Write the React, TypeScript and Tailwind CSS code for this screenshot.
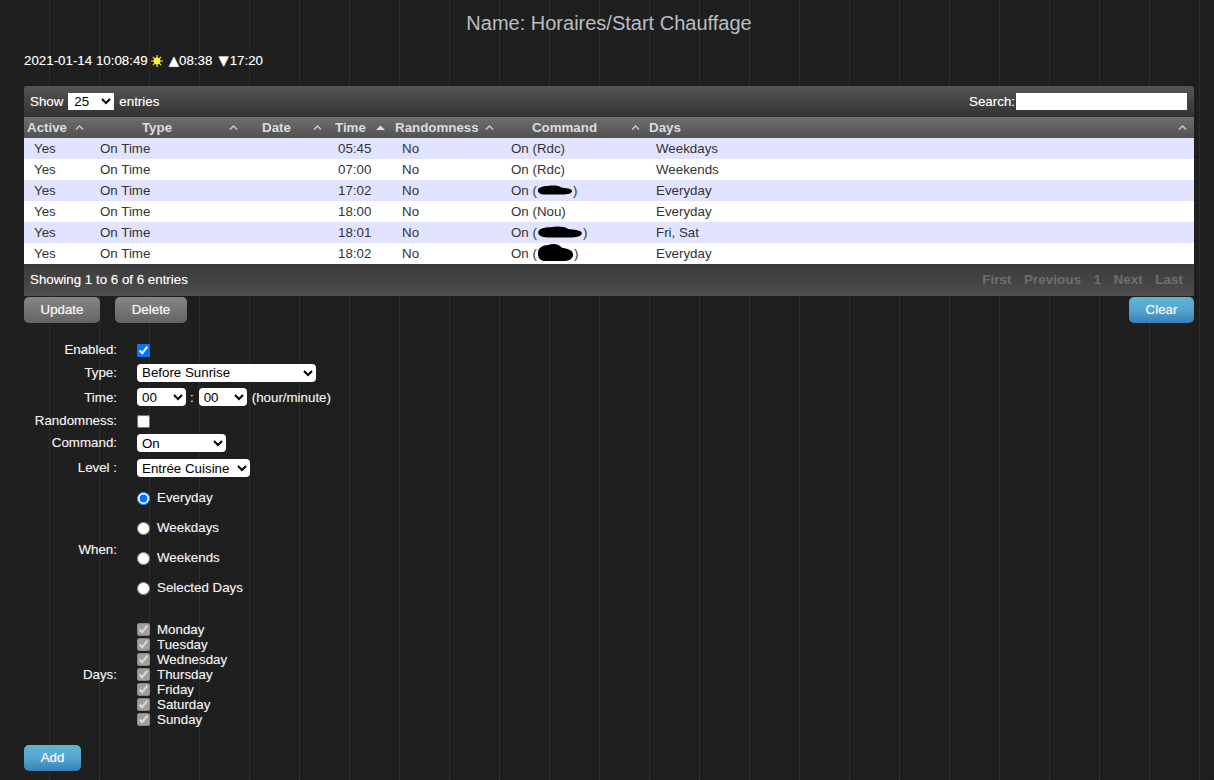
import React from "react";

const rows = [
  ["05:45", <>On (Rdc)</>, "Weekdays"],
  ["07:00", <>On (Rdc)</>, "Weekends"],
  ["17:02", <>On (<Blob w={36} h={10} />)</>, "Everyday"],
  ["18:00", <>On (Nou)</>, "Everyday"],
  ["18:01", <>On (<Blob w={46} h={12} />)</>, "Fri, Sat"],
  ["18:02", <>On (<Blob w={37} h={19} />)</>, "Everyday"],
] as const;

function Blob({ w, h }: { w: number; h: number }) {
  return (
    <svg width={w} height={h} viewBox="0 0 40 20" preserveAspectRatio="none" className="inline-block align-middle -mt-0.5">
      <path d="M1 11C1 5 6 2 12 2c6-2 12-1 15 3 5 1 12 2 12 7 0 5-5 7-11 7H9C4 19 1 16 1 11Z" fill="#000" />
    </svg>
  );
}

function Arrow({ solid }: { solid?: boolean }) {
  return (
    <svg width="9" height="6" viewBox="0 0 9 6" className="block shrink-0">
      {solid ? <path d="M4.5 0.5 9 5H0Z" fill="#ddd" /> : <path d="M1 4.5 4.5 1 8 4.5" fill="none" stroke="#ccc" strokeWidth="1.4" />}
    </svg>
  );
}

function Th({ label, w, center, solid, arrow, pl, shift }: { label: string; w: number; center?: boolean; solid?: boolean; arrow: number; pl?: number; shift?: number }) {
  return (
    <th style={{ width: w }} className="p-0 font-bold text-[13.33px] text-[#dcdcdc]">
      <div className="flex items-center h-[21px]" style={{ paddingRight: arrow, paddingLeft: pl ?? 3 }}>
        <span className={center ? "flex-1 text-center" : "flex-1 text-left"} style={{ paddingRight: shift ?? 0 }}>{label}</span>
        <Arrow solid={solid} />
      </div>
    </th>
  );
}

function Row({ label, children, className }: { label: string; children: React.ReactNode; className?: string }) {
  return (
    <div className={"flex items-center " + (className ?? "")}>
      <div className="w-[93px] text-right shrink-0">{label}</div>
      <div className="ml-5 flex items-center">{children}</div>
    </div>
  );
}

const selectCls = "appearance-auto bg-white text-black text-[13.33px] h-[18px] rounded-[4px] border-0 outline-none pl-[1px]";
const btn = "h-[26px] rounded-[5px] text-[13.33px] text-[#f4f4f4] flex items-center justify-center [text-shadow:0_0_1px_rgba(255,255,255,0.6)]";
const grayBtn = btn + " bg-gradient-to-b from-[#868686] to-[#646464]";
const blueBtn = btn + " bg-gradient-to-b from-[#5fb4d6] via-[#55a6cf] to-[#3a7fb8]";

export default function App() {
  return (
    <div
      className="min-h-[780px] w-full pl-6 pr-5 text-[13.33px] text-[#f2f2f2] bg-[#1e1e1e] bg-[linear-gradient(90deg,transparent_49px,#2c2c2c_49px,#2c2c2c_50px,transparent_50px),conic-gradient(#222222_25%,#1b1b1b_0_50%,#222222_0_75%,#1b1b1b_0)] bg-[size:50px_100%,2px_2px] overflow-hidden [text-shadow:0_0_1px_rgba(255,255,255,0.35)]"
      style={{ fontFamily: '"Liberation Sans", Arial, sans-serif' }}
    >
      <h1 className="pt-[12px] text-center text-[20px] leading-[22px] text-[#b8bec4] [text-shadow:none]">Name: Horaires/Start Chauffage</h1>

      <div className="mt-[17px] flex items-center h-[20px] text-white">
        <span>2021-01-14 10:08:49</span>
        <svg width="12" height="12" viewBox="0 0 12 12" className="ml-[3px]">
          <g stroke="#ffee33" strokeWidth="1.2">
            <path d="M6 0v12M0 6h12M1.8 1.8l8.4 8.4M10.2 1.8l-8.4 8.4" />
          </g>
          <circle cx="6" cy="6" r="3.4" fill="#ffee33" />
        </svg>
        <span className="ml-[6px] font-['DejaVu_Sans']">▲</span>
        <span>08:38</span>
        <span className="ml-[6px] font-['DejaVu_Sans']">▼</span>
        <span className="ml-[1px]">17:20</span>
      </div>

      <div className="mt-[15px] rounded-t-[3px] overflow-hidden">
        <div className="h-[31px] pl-[6px] pr-[7px] flex items-center justify-between bg-gradient-to-b from-[#555555] to-[#323232] text-white">
          <div className="flex items-center">
            Show
            <select defaultValue="25" className="appearance-auto bg-white text-black text-[13.33px] w-[46px] h-[17px] mx-[5px] border-0 pl-[2px]">
              <option>25</option>
            </select>
            entries
          </div>
          <div className="flex items-center">
            Search:
            <input className="w-[171px] h-[17px] bg-white ml-[1px]" />
          </div>
        </div>

        <table className="w-full table-fixed border-collapse [text-shadow:none]">
          <thead>
            <tr className="bg-gradient-to-b from-[#6e6e6e] to-[#525252]">
              <Th label="Active" w={66} arrow={6} />
              <Th label="Type" w={158} center arrow={10} shift={8} />
              <Th label="Date" w={80} center arrow={6} shift={11} />
              <Th label="Time" w={64} arrow={7} pl={7} solid />
              <Th label="Randomness" w={109} arrow={7} />
              <Th label="Command" w={145} center arrow={6} shift={6} />
              <Th label="Days" w={548} arrow={7} />
            </tr>
          </thead>
          <tbody>
            {rows.map((r, i) => (
              <tr key={i} className={(i % 2 === 0 ? "bg-[#e2e4ff]" : "bg-white") + " h-[21px] text-[13.33px] text-[#333333]"}>
                <td className="pl-[10px] p-0">Yes</td>
                <td className="pl-[10px] p-0">On Time</td>
                <td className="p-0"></td>
                <td className="pl-[10px] p-0">{r[0]}</td>
                <td className="pl-[10px] p-0">No</td>
                <td className="pl-[10px] p-0">{r[1]}</td>
                <td className="pl-[10px] p-0">{r[2]}</td>
              </tr>
            ))}
          </tbody>
        </table>

        <div className="h-[32px] px-[6px] flex items-center justify-between bg-gradient-to-b from-[#3a3a3a] to-[#4e4e4e] text-white">
          <span>Showing 1 to 6 of 6 entries</span>
          <div className="flex items-center gap-[12.5px] pr-[5px] text-[#6e6e6e] font-bold text-[13.5px] [text-shadow:none]">
            <span>First</span>
            <span>Previous</span>
            <span>1</span>
            <span>Next</span>
            <span>Last</span>
          </div>
        </div>
      </div>

      <div className="mt-[1px] flex items-center">
        <button className={grayBtn + " w-[76px]"}>Update</button>
        <button className={grayBtn + " w-[72px] ml-[15px]"}>Delete</button>
        <button className={blueBtn + " w-[65px] ml-auto"}>Clear</button>
      </div>

      <div className="mt-[17px]">
        <Row label="Enabled:" className="h-[20px]">
          <input type="checkbox" defaultChecked className="appearance-auto w-[13px] h-[13px] m-0" />
        </Row>
        <Row label="Type:" className="h-[25px]">
          <select className={selectCls + " w-[179px]"}><option>Before Sunrise</option></select>
        </Row>
        <Row label="Time:" className="h-[24px] pt-[1px]">
          <select className={selectCls + " w-[49px]"}><option>00</option></select>
          <span className="ml-[4px] mr-[5px]">:</span>
          <select className={selectCls + " w-[48px]"}><option>00</option></select>
          <span className="ml-[5px]">(hour/minute)</span>
        </Row>
        <Row label="Randomness:" className="h-[24px]">
          <input type="checkbox" className="appearance-auto w-[13px] h-[13px] m-0" />
        </Row>
        <Row label="Command:" className="h-[20px]">
          <select className={selectCls + " w-[89px]"}><option>On</option></select>
        </Row>
        <Row label="Level :" className="h-[30px]">
          <select className={selectCls + " w-[113px]"}><option>Entrée Cuisine</option></select>
        </Row>

        <Row label="When:">
          <div className="flex flex-col pb-[14px]">
            {["Everyday", "Weekdays", "Weekends", "Selected Days"].map((d, i) => (
              <label key={d} className="flex items-center h-[30px]">
                <input type="radio" name="when" defaultChecked={i === 0} className="appearance-auto w-[13px] h-[13px] m-0 mr-[7px]" />
                <span className="-mt-[1px]">{d}</span>
              </label>
            ))}
          </div>
        </Row>

        <Row label="Days:" className="mt-[5px]">
          <div className="flex flex-col">
            {["Monday", "Tuesday", "Wednesday", "Thursday", "Friday", "Saturday", "Sunday"].map((d) => (
              <label key={d} className="flex items-center h-[15px]">
                <input type="checkbox" disabled defaultChecked className="appearance-auto w-[13px] h-[13px] m-0 mr-[7px]" />
                <span>{d}</span>
              </label>
            ))}
          </div>
        </Row>
      </div>

      <button className={blueBtn + " w-[57px] mt-[18px]"}>Add</button>
    </div>
  );
}
